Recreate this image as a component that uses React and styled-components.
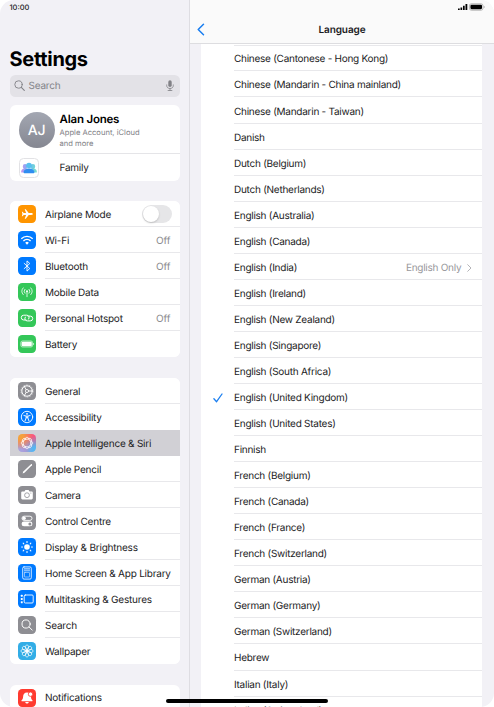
import React, { useState } from 'react'
import styled, { createGlobalStyle } from 'styled-components'

const GlobalStyle = createGlobalStyle`
  * {
    box-sizing: border-box;
  }

  body {
    margin: 0;
    background: #fff;
    overflow: hidden;
    font-family: Inter, 'Liberation Sans', sans-serif;
    color: #1c1c1e;
    text-rendering: geometricPrecision;
  }

  h1, h2, p {
    margin: 0;
  }
`

const petals = (count) => Array.from({ length: count }, (_, i) => (i * 360) / count)

const stroke = { fill: 'none', stroke: '#fff', strokeLinecap: 'round', strokeLinejoin: 'round' }

const glyphs = {
  airplane: (
    <path
      fill="#fff"
      d="M14.8 9c0-.6-.7-.9-1.5-.9h-2.6L7.8 4.2H6.7l1.4 3.9H5.7L4.6 6.8h-.8L4.4 9l-.6 2.2h.8l1.1-1.3h2.4l-1.4 3.9h1.1l2.9-3.9h2.6c.8 0 1.5-.3 1.5-.9z"
    />
  ),
  wifi: (
    <g {...stroke} strokeWidth="1.4" strokeLinecap="butt">
      <path d="M3.3 7.7a8.2 8.2 0 0 1 11.4 0" />
      <path d="M5.4 10a5.2 5.2 0 0 1 7.2 0" />
      <path d="M9 13.7l-1.8-2a2.6 2.6 0 0 1 3.6 0z" fill="#fff" stroke="none" />
    </g>
  ),
  bluetooth: <path {...stroke} strokeWidth="0.9" d="M6.2 6.4l5.6 5.1L9 14.1V3.9l2.8 2.6-5.6 5.1" />,
  mobile: (
    <g {...stroke} strokeWidth="0.8">
      <circle cx="9" cy="8.2" r="1" fill="#fff" stroke="none" />
      <path d="M9 8.5v5.2M6.9 6.3a2.9 2.9 0 0 0 0 3.9M11.1 6.3a2.9 2.9 0 0 1 0 3.9M5.2 4.9a5 5 0 0 0 0 6.7M12.8 4.9a5 5 0 0 1 0 6.7" />
    </g>
  ),
  hotspot: (
    <g {...stroke} strokeWidth="1">
      <path d="M8 11H5.7a2.4 2.4 0 0 1 0-4.8h3a2.4 2.4 0 0 1 1.9 3.9" />
      <path d="M10 7.1h2.3a2.4 2.4 0 0 1 0 4.8h-3a2.4 2.4 0 0 1-1.9-3.9" />
    </g>
  ),
  battery: (
    <g>
      <rect x="2.8" y="6" width="11.8" height="6" rx="1.7" fill="none" stroke="#fff" strokeWidth="0.6" />
      <rect x="3.6" y="6.8" width="10.2" height="4.4" rx="1" fill="#fff" />
      <path d="M15.2 8v2c.7-.2 1-.5 1-1s-.3-.8-1-1z" fill="#fff" />
    </g>
  ),
  general: (
    <g {...stroke}>
      <circle cx="9" cy="9" r="5.2" strokeWidth="1" />
      <circle cx="9" cy="9" r="6" strokeWidth="0.8" strokeDasharray="0.8 0.85" strokeLinecap="butt" />
      <circle cx="9" cy="9" r="1.6" strokeWidth="0.8" />
      <path d="M10.7 9h3.3M8.1 7.5L6.4 4.6M8.1 10.5l-1.7 2.9" strokeWidth="0.9" />
    </g>
  ),
  accessibility: (
    <g {...stroke}>
      <circle cx="9" cy="9" r="5.7" strokeWidth="0.9" />
      <circle cx="9" cy="5.8" r="0.9" fill="#fff" stroke="none" />
      <path d="M5.9 7.5l2.3.6v1.7L7 13M12.1 7.5l-2.3.6v1.7L11 13M8.2 8.1h1.6M8.2 9.7h1.6" strokeWidth="0.9" />
    </g>
  ),
  siri: (
    <g {...stroke} strokeWidth="0.8">
      <circle cx="9" cy="9" r="4" />
      {petals(8).map((angle) => (
        <path key={angle} transform={`rotate(${angle} 9 9)`} d="M6.8 5.2C7.2 2.6 10.8 2.6 11.2 5.2" />
      ))}
    </g>
  ),
  pencil: (
    <path d="M4.6 13.5l.7-1.9 7.7-7.4c.6-.4 1.4.4.9 1l-7.4 7.6z" fill="#fff" />
  ),
  camera: (
    <g>
      <path
        d="M4.5 5.4h2l.7-1.1c.2-.3.4-.4.7-.4h2.2c.3 0 .5.1.7.4l.7 1.1h2c.8 0 1.3.5 1.3 1.3v5.4c0 .8-.5 1.3-1.3 1.3h-9c-.8 0-1.3-.5-1.3-1.3V6.7c0-.8.5-1.3 1.3-1.3z"
        fill="#fff"
      />
      <circle cx="9" cy="9.2" r="2.4" fill="none" stroke="#8e8e93" strokeWidth="0.8" />
      <circle cx="12.9" cy="7" r="0.5" fill="#8e8e93" />
    </g>
  ),
  control: (
    <g>
      <rect x="4" y="4.2" width="10" height="4.2" rx="2.1" fill="none" stroke="#fff" strokeWidth="0.9" />
      <circle cx="6.1" cy="6.3" r="1.7" fill="#fff" />
      <rect x="3.6" y="9.5" width="10.8" height="4.8" rx="2.4" fill="#fff" />
      <circle cx="11.9" cy="11.9" r="1.5" fill="#8e8e93" />
    </g>
  ),
  display: (
    <g {...stroke}>
      <circle cx="9" cy="9" r="2.8" fill="#fff" stroke="none" />
      {petals(8).map((angle) => (
        <path key={angle} transform={`rotate(${angle} 9 9)`} d="M9 4.5V3.6" strokeWidth="1.1" />
      ))}
    </g>
  ),
  home: (
    <g {...stroke} strokeWidth="0.8">
      <rect x="4.7" y="2.9" width="8.6" height="12.2" rx="1.3" />
      <path d="M6.3 4.9h1.4M8.3 4.9h1.4M10.3 4.9h1.4M6.3 6.7h1.4M8.3 6.7h1.4M10.3 6.7h1.4" strokeWidth="1.1" strokeLinecap="butt" />
      <rect x="6.5" y="8.4" width="5" height="4.6" rx="0.4" strokeWidth="0.5" />
    </g>
  ),
  multitask: (
    <g>
      <rect x="6.2" y="5" width="9" height="8" rx="1.1" {...stroke} strokeWidth="0.9" />
      <rect x="2.8" y="4.7" width="1.9" height="2" rx="0.5" fill="#fff" />
      <rect x="2.8" y="8" width="1.9" height="2" rx="0.5" fill="#fff" />
      <rect x="2.8" y="11.3" width="1.9" height="2" rx="0.5" fill="#fff" />
    </g>
  ),
  search: (
    <g {...stroke} strokeWidth="1">
      <circle cx="8.1" cy="8" r="4.1" />
      <path d="M11.2 11.1l3 3" />
    </g>
  ),
  wallpaper: (
    <g {...stroke} strokeWidth="0.75">
      {petals(8).map((angle) => (
        <path key={angle} transform={`rotate(${angle} 9 9)`} d="M9 8C7.5 6.8 6.9 5 7.7 3.7c.6-.8 2-.8 2.6 0C11.1 5 10.5 6.8 9 8z" />
      ))}
      <circle cx="9" cy="9" r="1.1" fill="#fff" stroke="none" />
    </g>
  ),
  bell: (
    <g>
      <path
        d="M9 3.5c-2.6 0-3.8 1.9-3.9 4.2C5 9.6 4.6 10.3 3.8 11c-.7.6-.4 1.3.4 1.3h9.6c.8 0 1.1-.7.4-1.3-.8-.7-1.1-1.4-1.2-3.3C12.8 5.4 11.6 3.5 9 3.5z"
        fill="#fff"
      />
      <path d="M7.2 13.1h3.6c-.3 1-1 1.5-1.8 1.5s-1.5-.5-1.8-1.5z" fill="#fff" />
      <circle cx="12.5" cy="5.2" r="2.2" fill="#fff" stroke="#ff3b30" strokeWidth="0.8" />
    </g>
  )
}

const connectivity = [
  { label: 'Airplane Mode', icon: 'airplane', color: '#ff9500', toggle: true },
  { label: 'Wi-Fi', icon: 'wifi', color: '#007aff', value: 'Off' },
  { label: 'Bluetooth', icon: 'bluetooth', color: '#007aff', value: 'Off' },
  { label: 'Mobile Data', icon: 'mobile', color: '#34c759' },
  { label: 'Personal Hotspot', icon: 'hotspot', color: '#34c759', value: 'Off' },
  { label: 'Battery', icon: 'battery', color: '#34c759' }
]

const device = [
  { label: 'General', icon: 'general', color: '#8e8e93' },
  { label: 'Accessibility', icon: 'accessibility', color: '#007aff' },
  {
    label: 'Apple Intelligence & Siri',
    icon: 'siri',
    color:
      'radial-gradient(circle at 8% 8%, #f5a13c 0 15%, transparent 60%), radial-gradient(circle at 5% 100%, #a9a1df 0 15%, transparent 60%), radial-gradient(circle at 95% 100%, #55b6f2 0 20%, transparent 65%), #fa5480'
  },
  { label: 'Apple Pencil', icon: 'pencil', color: '#8e8e93' },
  { label: 'Camera', icon: 'camera', color: '#8e8e93' },
  { label: 'Control Centre', icon: 'control', color: '#8e8e93' },
  { label: 'Display & Brightness', icon: 'display', color: '#007aff' },
  { label: 'Home Screen & App Library', icon: 'home', color: '#007aff' },
  { label: 'Multitasking & Gestures', icon: 'multitask', color: '#007aff' },
  { label: 'Search', icon: 'search', color: '#8e8e93' },
  { label: 'Wallpaper', icon: 'wallpaper', color: '#32ade6' }
]

const alerts = [{ label: 'Notifications', icon: 'bell', color: '#ff3b30' }]

const languages = [
  'Chinese (Cantonese - Hong Kong)',
  'Chinese (Mandarin - China mainland)',
  'Chinese (Mandarin - Taiwan)',
  'Danish',
  'Dutch (Belgium)',
  'Dutch (Netherlands)',
  'English (Australia)',
  'English (Canada)',
  'English (India)',
  'English (Ireland)',
  'English (New Zealand)',
  'English (Singapore)',
  'English (South Africa)',
  'English (United Kingdom)',
  'English (United States)',
  'Finnish',
  'French (Belgium)',
  'French (Canada)',
  'French (France)',
  'French (Switzerland)',
  'German (Austria)',
  'German (Germany)',
  'German (Switzerland)',
  'Hebrew',
  'Italian (Italy)',
  'Italian (Switzerland)'
]

const MenuGroup = ({ items, active, onSelect }) => (
  <Card>
    {items.map((item, i) => {
      const selected = item.label === active
      const next = items[i + 1]
      return (
        <MenuRow key={item.label} $selected={selected} onClick={() => onSelect(item.label)}>
          <IconTile $color={item.color}>
            <svg width="18" height="18" viewBox="0 0 18 18">{glyphs[item.icon]}</svg>
          </IconTile>
          <RowBody $line={next && !selected && next.label !== active}>
            <Label>{item.label}</Label>
            {item.value && <Value>{item.value}</Value>}
            {item.toggle && <Toggle />}
          </RowBody>
        </MenuRow>
      )
    })}
  </Card>
)

const App = () => {
  const [active, setActive] = useState('Apple Intelligence & Siri')
  const [language, setLanguage] = useState('English (United Kingdom)')

  return (
    <Screen>
      <GlobalStyle />
      <Sidebar>
        <Clock>10:00</Clock>
        <Title>Settings</Title>
        <SearchField>
          <svg width="11" height="11" viewBox="0 0 11 11" fill="none" stroke="#818186" strokeLinecap="round">
            <circle cx="4.5" cy="4.5" r="3.7" strokeWidth="0.9" />
            <path d="M7.3 7.3l3 3" strokeWidth="1.1" />
          </svg>
          <span>Search</span>
          <svg width="8" height="11" viewBox="0 0 8 11" fill="none" stroke="#818186" strokeLinecap="round">
            <rect x="2.3" y="0.2" width="3.4" height="6.8" rx="1.7" fill="#818186" stroke="none" />
            <path d="M0.7 4.9v.6c0 1.9 1.4 3 3.3 3s3.3-1.1 3.3-3v-.6M4 8.5v1.9M2.1 10.5h3.8" strokeWidth="0.8" />
          </svg>
        </SearchField>
        <Card>
          <Account>
            <Avatar>AJ</Avatar>
            <AccountText>
              <h2>Alan Jones</h2>
              <p>Apple Account, iCloud<br />and more</p>
            </AccountText>
          </Account>
          <Family>
            <FamilyTile>
              <svg width="18" height="18" viewBox="0 0 18 18">
                <defs>
                  <linearGradient id="people" x1="0" x2="1">
                    <stop offset="0" stopColor="#c990ef" />
                    <stop offset="0.5" stopColor="#65b9f5" />
                    <stop offset="1" stopColor="#79dfc9" />
                  </linearGradient>
                </defs>
                <path
                  fill="url(#people)"
                  d="M2.8 7.2a2.3 2.3 0 0 1 4.6 0c0 1-.4 1.8-1 2.3h5.2c-.6-.5-1-1.3-1-2.3a2.3 2.3 0 0 1 4.6 0c0 1-.4 1.9-1.1 2.4 1.7.4 2.8 1.6 2.8 3.4 0 .4-.3.6-.7.6H1.8c-.4 0-.7-.2-.7-.6 0-1.8 1.1-3 2.8-3.4-.7-.5-1.1-1.4-1.1-2.4z"
                />
                <circle cx="9" cy="6.5" r="2.8" fill="#59c0ee" />
                <path d="M3.6 13.3c0-2.2 2.1-3.5 5.4-3.5s5.4 1.3 5.4 3.5c0 .7-.5 1-1.2 1H4.8c-.7 0-1.2-.3-1.2-1z" fill="#2f8df0" />
              </svg>
            </FamilyTile>
            <span>Family</span>
          </Family>
        </Card>
        <MenuGroup items={connectivity} active={active} onSelect={setActive} />
        <MenuGroup items={device} active={active} onSelect={setActive} />
        <MenuGroup items={alerts} active={active} onSelect={setActive} />
      </Sidebar>
      <Detail>
        <Header>
          <StatusIcons>
            <svg width="28" height="8" viewBox="0 0 28 8">
              <path d="M0 5.5h1.7V7H0zM2.5 4.4h1.7V7H2.5zM5 2.8h1.7V7H5zM7.5 1.1h1.8V7H7.5z" fill="#000" />
              <rect x="11.4" y="0.8" width="13.6" height="6.4" rx="2" fill="none" stroke="#999" strokeWidth="0.7" />
              <rect x="12.4" y="1.8" width="11.6" height="4.4" rx="1.1" fill="#000" />
              <path d="M25.9 3v2c.5-.2.8-.5.8-1s-.3-.8-.8-1z" fill="#999" />
            </svg>
          </StatusIcons>
          <NavBar>
            <svg width="8" height="13" viewBox="0 0 8 13">
              <path d="M6.5 1.2L1.2 6.5l5.3 5.3" fill="none" stroke="#1b7ff0" strokeWidth="1.5" strokeLinecap="round" strokeLinejoin="round" />
            </svg>
            <h2>Language</h2>
          </NavBar>
        </Header>
        <LanguageList>
          {languages.map((name) => (
            <LanguageRow key={name} onClick={() => setLanguage(name)}>
              <Check>
                {name === language && (
                  <svg width="10" height="10" viewBox="0 0 10 10">
                    <path d="M0.9 5.7l2.7 3L9 1" fill="none" stroke="#1b7ff0" strokeWidth="1.3" strokeLinecap="round" strokeLinejoin="round" />
                  </svg>
                )}
              </Check>
              <LanguageBody>
                <span>{name}</span>
                {name === 'English (India)' && (
                  <More>
                    English Only
                    <svg width="5" height="8" viewBox="0 0 5 8">
                      <path d="M0.7 0.7L4 4 .7 7.3" fill="none" stroke="#b4b4b8" strokeWidth="1" strokeLinecap="round" />
                    </svg>
                  </More>
                )}
              </LanguageBody>
            </LanguageRow>
          ))}
        </LanguageList>
      </Detail>
      <HomeBar />
    </Screen>
  )
}

const Screen = styled.div`
  position: relative;
  display: flex;
  width: 494px;
  height: 707px;
  overflow: hidden;
  border-radius: 14px;
  background: #f2f1f6;
  font-size: 10px;
  line-height: 12px;
  letter-spacing: -0.22px;
`

const Sidebar = styled.aside`
  display: flex;
  flex-direction: column;
  flex: none;
  width: 190px;
  height: 707px;
  padding: 0 9px 0 9.5px;
  border-right: 1px solid #dedde2;
  overflow: hidden;
`

const Clock = styled.span`
  height: 44px;
  flex: none;
  padding-top: 1.6px;
  font-size: 7.5px;
  font-weight: 500;
  letter-spacing: 0;
`

const Title = styled.h1`
  flex: none;
  height: 31px;
  font-size: 20px;
  line-height: 30px;
  letter-spacing: -0.3px;
  color: #000;
`

const SearchField = styled.div`
  display: flex;
  align-items: center;
  flex: none;
  height: 21.5px;
  margin-bottom: 8.8px;
  padding: 0 6px 0 4.5px;
  border-radius: 5.5px;
  background: #e3e2e7;
  color: #828287;

  span {
    flex: 1;
    padding-top: 1px;
    margin-left: 3.5px;
  }
`

const Card = styled.div`
  flex: none;
  margin-bottom: 20.4px;
  border-radius: 6px;
  background: #fff;
  overflow: hidden;
`

const Account = styled.div`
  display: flex;
  height: 49px;
  padding: 7px 0 0 9px;
`

const Avatar = styled.div`
  display: flex;
  align-items: center;
  justify-content: center;
  flex: none;
  width: 36px;
  height: 36px;
  border-radius: 50%;
  background: linear-gradient(#a3a7b2, #858791);
  color: #fff;
  font-size: 14px;
  line-height: 18px;
  padding-top: 1px;
  font-weight: 500;
`

const AccountText = styled.div`
  flex: 1;
  height: 42px;
  margin-left: 5px;
  border-bottom: 1px solid #e5e5e8;

  h2 {
    font-size: 11.5px;
    line-height: 15px;
    font-weight: 600;
    letter-spacing: -0.2px;
    color: #000;
  }

  p {
    margin-top: 0.7px;
    font-size: 7.6px;
    line-height: 10.8px;
    letter-spacing: 0;
    color: #818186;
  }
`

const Family = styled.div`
  display: flex;
  align-items: center;
  height: 26.5px;
  padding-left: 9.5px;

  span {
    margin-left: 20.5px;
  }
`

const FamilyTile = styled.div`
  display: flex;
  width: 20px;
  height: 20px;
  border: 1px solid #e2e2e5;
  border-radius: 4.5px;
`

const MenuRow = styled.div`
  display: flex;
  align-items: center;
  height: 26.05px;
  padding-left: 8.9px;
  background: ${({ $selected }) => ($selected ? '#d1d0d5' : '#fff')};
`

const IconTile = styled.div`
  display: flex;
  flex: none;
  width: 18px;
  height: 18px;
  border-radius: 4.2px;
  background: ${({ $color }) => $color};
`

const RowBody = styled.div`
  display: flex;
  align-items: center;
  justify-content: space-between;
  flex: 1;
  height: 100%;
  margin-left: 8.6px;
  padding-right: 8.2px;
  white-space: nowrap;
  box-shadow: ${({ $line }) => ($line ? 'inset 0 -1px #e8e8eb' : 'none')};
`

const Label = styled.span`
  padding-top: 1.4px;
`

const Value = styled(Label)`
  padding-right: 1.5px;
  letter-spacing: -0.1px;
  color: #8a8a8e;
`

const Toggle = styled.span`
  display: flex;
  width: 30px;
  height: 18px;
  padding: 1px;
  border-radius: 9px;
  background: #e6e6e8;

  &::before {
    content: '';
    width: 16px;
    height: 16px;
    border-radius: 50%;
    background: #fff;
    box-shadow: 0 1px 2px rgba(0, 0, 0, 0.18);
  }
`

const Detail = styled.main`
  display: flex;
  flex-direction: column;
  flex: 1;
  height: 707px;
  overflow: hidden;
`

const Header = styled.header`
  flex: none;
  height: 44px;
  border-bottom: 1px solid #dddde0;
  background: #fafafa;
`

const StatusIcons = styled.div`
  display: flex;
  justify-content: flex-end;
  height: 15px;
  padding: 3px 8px 0 0;
`

const NavBar = styled.div`
  display: flex;
  align-items: center;
  height: 28px;
  padding: 0 15px 0 7px;

  h2 {
    flex: 1;
    padding-top: 1px;
    font-size: 10px;
    font-weight: 600;
    letter-spacing: -0.1px;
    text-align: center;
  }
`

const LanguageList = styled.div`
  flex: 1;
  margin: 0 11.7px 0 11.3px;
  padding-top: 1.4px;
  background: linear-gradient(#e8e8eb, #e8e8eb) 32.7px 1px / 100% 1px no-repeat #fff;
  overflow: hidden;
`

const LanguageRow = styled.div`
  display: flex;
  height: 26.05px;
`

const Check = styled.div`
  display: flex;
  align-items: center;
  flex: none;
  width: 32.7px;
  padding: 1px 0 0 11.7px;
`

const LanguageBody = styled.div`
  display: flex;
  align-items: center;
  justify-content: space-between;
  flex: 1;
  padding: 2px 10px 0 0;
  letter-spacing: -0.26px;
  box-shadow: inset 0 -1px #e8e8eb;
`

const More = styled.span`
  display: flex;
  align-items: center;
  gap: 6px;
  color: #98989c;
`

const HomeBar = styled.div`
  position: absolute;
  left: 166px;
  bottom: 4.5px;
  width: 162px;
  height: 3.5px;
  border-radius: 2px;
  background: #000;
`

export default App
